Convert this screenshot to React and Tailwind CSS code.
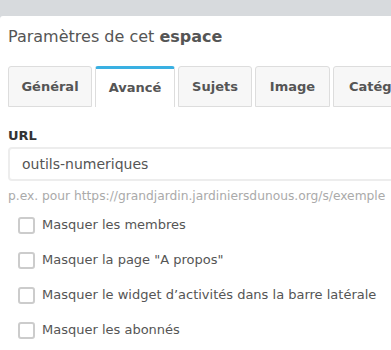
import React from 'react';

const tabs = ['Général', 'Avancé', 'Sujets', 'Image', 'Catégories'];

const options = [
  'Masquer les membres',
  'Masquer la page "A propos"',
  'Masquer le widget d’activités dans la barre latérale',
  'Masquer les abonnés',
];

export default function App() {
  return (
    <div className="w-[391px] h-[350px] overflow-hidden bg-[#d7dadd] pt-4 font-['DejaVu_Sans',sans-serif]">
      <div className="bg-white h-full rounded-tl-[3px] overflow-hidden">
        {/* Header */}
        <h1 className="px-2 pt-[11px] text-[16px] leading-5 text-[#555]">
          Paramètres de cet <b className="text-[#555]">espace</b>
        </h1>

        {/* Tabs */}
        <div className="flex gap-[3px] pl-2 mt-[19px] whitespace-nowrap">
          {tabs.map((tab, i) =>
            i === 1 ? (
              <div key={tab} className="w-[80px] h-[41px] shrink-0 flex items-center justify-center bg-white border border-b-0 border-[#ddd] border-t-[3px] border-t-[#3ab0e2] rounded-t-[3px] text-[13px] font-bold text-[#555]">
                {tab}
              </div>
            ) : (
              <div key={tab} className={`${i === 0 ? 'w-[84px]' : i === 2 ? 'w-[74px]' : i === 3 ? 'w-[75px]' : 'px-[15px]'} h-[41px] shrink-0 flex items-center justify-center bg-[#f7f7f7] border border-[#ddd] rounded-t-[3px] text-[13px] font-bold text-[#555]`}>
                {tab}
              </div>
            )
          )}
        </div>

        {/* Form */}
        <div className="pl-2 pt-[21px]">
          <label className="block text-[13px] font-bold text-[#333] leading-4">URL</label>
          <div className="mt-[3px] h-[34px] w-[400px] border-2 border-[#ededed] rounded-[4px] px-3 flex items-center text-[14px] text-[#555]">
            outils-numeriques
          </div>
          <p className="mt-[7px] text-[12.25px] leading-4 text-[#aaa] whitespace-nowrap">
            p.ex. pour https://grandjardin.jardiniersdunous.org/s/exemple
          </p>

          <div className="mt-[12px] flex flex-col gap-[17px] pl-[10px]">
            {options.map((o) => (
              <div key={o} className="flex items-center gap-[7px] h-[18px]">
                <span className="w-[17px] h-[17px] shrink-0 border-2 border-[#ccc] rounded-[3px] bg-white" />
                <span className="text-[13px] text-[#555] whitespace-nowrap">{o}</span>
              </div>
            ))}
          </div>
        </div>
      </div>
    </div>
  );
}
